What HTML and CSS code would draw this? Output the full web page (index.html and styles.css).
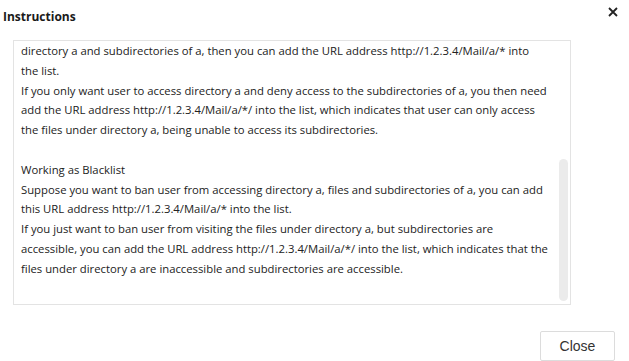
FILE: index.html
```html
<!DOCTYPE html>
<html>
<head>
<meta charset="utf-8">
<link rel="stylesheet" href="styles.css">
</head>
<body>
<div class="dialog">
  <div class="header">
    <span class="title">Instructions</span>
    <svg class="close-x" width="10" height="10" viewBox="0 0 10 10"><path d="M1 1L9 9M9 1L1 9" stroke="#222" stroke-width="1.8" fill="none"/></svg>
  </div>
  <div class="box">
    <div class="content">
      <div class="line">directory a and subdirectories of a, then you can add the URL address http://1.2.3.4/Mail/a/* into</div>
      <div class="line">the list.</div>
      <div class="line">If you only want user to access directory a and deny access to the subdirectories of a, you then need</div>
      <div class="line">add the URL address http://1.2.3.4/Mail/a/*/ into the list, which indicates that user can only access</div>
      <div class="line">the files under directory a, being unable to access its subdirectories.</div>
      <div class="line">&nbsp;</div>
      <div class="line">Working as Blacklist</div>
      <div class="line">Suppose you want to ban user from accessing directory a, files and subdirectories of a, you can add</div>
      <div class="line">this URL address http://1.2.3.4/Mail/a/* into the list.</div>
      <div class="line">If you just want to ban user from visiting the files under directory a, but subdirectories are</div>
      <div class="line">accessible, you can add the URL address http://1.2.3.4/Mail/a/*/ into the list, which indicates that the</div>
      <div class="line">files under directory a are inaccessible and subdirectories are accessible.</div>
    </div>
    <div class="thumb"></div>
  </div>
  <div class="footer">
    <button class="btn">Close</button>
  </div>
</div>
</body>
</html>
```
FILE: styles.css
```css
html, body {
  margin: 0;
  padding: 0;
  background: #fff;
}
.dialog {
  width: 629px;
  height: 361px;
  display: flex;
  flex-direction: column;
  font-family: "Open Sans", "Noto Sans", sans-serif;
}
.header {
  display: flex;
  justify-content: space-between;
  align-items: center;
  height: 30px;
  padding: 0 11px 0 3px;
}
.title {
  font-size: 12px;
  font-weight: 700;
  color: #1a1a1a;
  margin-top: 2px;
}
.close-x {
  margin-top: -6px;
}
.box {
  position: relative;
  margin: 10px 0 0 13px;
  width: 556px;
  height: 263px;
  border: 1px solid #e3e3e3;
  overflow: hidden;
}
.content {
  padding: 0 0 0 7px;
  font-size: 11.3px;
  color: #222;
  line-height: 19.8px;
}
.line {
  white-space: nowrap;
}
.thumb {
  position: absolute;
  right: 2px;
  top: 118px;
  width: 9px;
  height: 142px;
  border-radius: 5px;
  background: #ebebeb;
}
.footer {
  display: flex;
  justify-content: flex-end;
  padding: 26px 14px 0 0;
}
.btn {
  width: 75px;
  height: 30px;
  background: #fff;
  border: 1px solid #dcdcdc;
  border-radius: 2px;
  font-family: "Liberation Sans", Arial, sans-serif;
  font-size: 14px;
  color: #333;
  padding: 0;
}
```
